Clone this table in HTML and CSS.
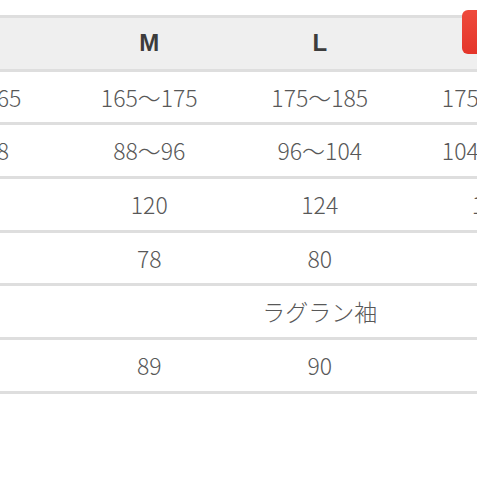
FILE: index.html
```html
<!DOCTYPE html>
<html lang="ja">
<head>
<meta charset="utf-8">
<link rel="stylesheet" href="styles.css">
</head>
<body>
<div class="page">
  <div class="table">
    <div class="row head">
      <div class="cell">S</div><div class="cell">M</div><div class="cell">L</div><div class="cell">XL</div>
    </div>
    <div class="row">
      <div class="cell">155〜165</div><div class="cell">165〜175</div><div class="cell">175〜185</div><div class="cell">175〜190</div>
    </div>
    <div class="row">
      <div class="cell">80〜88</div><div class="cell">88〜96</div><div class="cell">96〜104</div><div class="cell">104〜112</div>
    </div>
    <div class="row">
      <div class="cell">116</div><div class="cell">120</div><div class="cell">124</div><div class="cell">128</div>
    </div>
    <div class="row">
      <div class="cell">76</div><div class="cell">78</div><div class="cell">80</div><div class="cell">82</div>
    </div>
    <div class="row">
      <div class="cell"></div><div class="cell"></div><div class="cell">ラグラン袖</div><div class="cell"></div>
    </div>
    <div class="row last">
      <div class="cell">88</div><div class="cell">89</div><div class="cell">90</div><div class="cell">91</div>
    </div>
  </div>
  <div class="mark"></div>
</div>
</body>
</html>
```
FILE: styles.css
```css
html, body {
  margin: 0;
  padding: 0;
  background: #ffffff;
  overflow: hidden;
  width: 477px;
  height: 477px;
}
.page {
  position: relative;
  width: 477px;
  height: 477px;
  overflow: hidden;
}
.table {
  margin-top: 15px;
  margin-left: -118px;
  width: 700px;
  font-family: "Noto Sans CJK JP", "Noto Sans", sans-serif;
}
.row {
  display: grid;
  grid-template-columns: 182px repeat(3, 170.5px);
  height: 50.7px;
  border-top: 3px solid #dedede;
  align-items: center;
}
.row.last {
  border-bottom: 3px solid #dedede;
}
.cell {
  text-align: center;
  font-size: 23px;
  font-weight: 300;
  color: #585858;
  line-height: 1;
  white-space: nowrap;
}
.head {
  background: #efefef;
}
.head .cell {
  font-family: "Liberation Sans", Arial, sans-serif;
  font-weight: 700;
  font-size: 24px;
  color: #3c3c3c;
}
.mark {
  position: absolute;
  left: 462px;
  top: 10px;
  width: 30px;
  height: 44px;
  border-radius: 6px;
  background: linear-gradient(180deg, #ee4a3c 0%, #e4352a 100%);
}
```
